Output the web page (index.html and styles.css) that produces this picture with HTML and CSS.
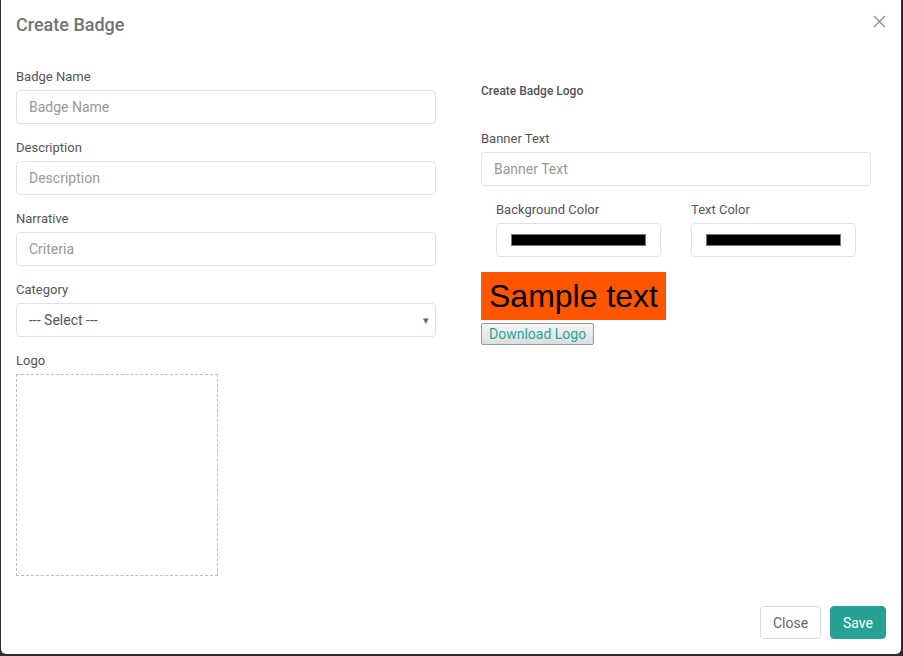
FILE: index.html
```html
<!DOCTYPE html>
<html>
<head>
<meta charset="utf-8">
<link rel="stylesheet" href="styles.css">
</head>
<body>
<div class="modal">
  <div class="modal-header">
    <h4 class="modal-title">Create Badge</h4>
    <button class="close-x" aria-label="Close">
      <svg width="13" height="13" viewBox="0 0 13 13"><path d="M1 1L12 12M12 1L1 12" stroke="#8a8a8a" stroke-width="1.2" fill="none"/></svg>
    </button>
  </div>
  <div class="modal-body">
    <div class="col-left">
      <div class="group">
        <label class="lbl">Badge Name</label>
        <div class="input placeholder">Badge Name</div>
      </div>
      <div class="group">
        <label class="lbl">Description</label>
        <div class="input placeholder">Description</div>
      </div>
      <div class="group">
        <label class="lbl">Narrative</label>
        <div class="input placeholder">Criteria</div>
      </div>
      <div class="group">
        <label class="lbl">Category</label>
        <div class="input select"><span>--- Select ---</span><span class="caret">▾</span></div>
      </div>
      <div class="group">
        <label class="lbl">Logo</label>
        <div class="logo-drop"></div>
      </div>
    </div>
    <div class="col-right">
      <div class="subhead">Create Badge Logo</div>
      <div class="group">
        <label class="lbl">Banner Text</label>
        <div class="input placeholder">Banner Text</div>
      </div>
      <div class="color-row">
        <div class="color-group">
          <label class="lbl">Background Color</label>
          <div class="input color"><div class="swatch"></div></div>
        </div>
        <div class="color-group">
          <label class="lbl">Text Color</label>
          <div class="input color"><div class="swatch"></div></div>
        </div>
      </div>
      <div class="sample">Sample text</div>
      <div><button class="dl-btn">Download Logo</button></div>
    </div>
  </div>
  <div class="modal-footer">
    <button class="btn btn-close">Close</button>
    <button class="btn btn-save">Save</button>
  </div>
</div>
</body>
</html>
```
FILE: styles.css
```css
html, body {
  margin: 0;
  padding: 0;
}
body {
  background: #2e2e2e;
  width: 903px;
  height: 656px;
  overflow: hidden;
  font-family: Roboto, "Liberation Sans", sans-serif;
}
.modal {
  margin-left: 1px;
  width: 900px;
  height: 654px;
  background: #fff;
  border-radius: 0 0 5px 5px;
  display: flex;
  flex-direction: column;
  box-sizing: border-box;
}
.modal-header {
  display: flex;
  justify-content: space-between;
  align-items: flex-start;
  padding: 11px 15px 0 15px;
  height: 56px;
  box-sizing: border-box;
}
.modal-title {
  margin: 0;
  font-size: 18px;
  font-weight: 500;
  line-height: 27px;
  color: #737373;
}
.close-x {
  border: 0;
  background: none;
  padding: 0;
  margin: 4px 0 0 0;
  width: 13px;
  height: 13px;
  display: block;
}
.close-x svg { display: block; }
.modal-body {
  display: grid;
  grid-template-columns: 420px 390px;
  column-gap: 45px;
  padding: 11px 15px 0 15px;
}
.group {
  display: flex;
  flex-direction: column;
  margin-bottom: 14px;
}
.lbl {
  font-size: 13px;
  line-height: 19px;
  color: #555;
  margin-bottom: 4px;
}
.input {
  height: 34px;
  box-sizing: border-box;
  border: 1px solid #e2e2e2;
  border-radius: 4px;
  padding: 0 12px;
  display: flex;
  align-items: center;
  font-size: 14px;
  color: #555;
}
.placeholder { color: #999; }
.select {
  justify-content: space-between;
  padding-right: 6px;
}
.caret {
  font-size: 11px;
  color: #666;
}
.logo-drop {
  width: 202px;
  height: 202px;
  box-sizing: border-box;
  border: 1px dashed #bdbdbd;
}
.subhead {
  font-size: 12px;
  font-weight: 500;
  line-height: 16px;
  color: #555;
  margin: 16px 0 30px 0;
}
.color-row {
  display: flex;
  gap: 30px;
  padding-left: 15px;
}
.color-row .color-group {
  display: flex;
  flex-direction: column;
  width: 165px;
}
.color {
  padding: 0 14px;
}
.swatch {
  width: 100%;
  height: 12px;
  box-sizing: border-box;
  background: #000;
  border: 1px solid #777;
}
.sample {
  margin-top: 15px;
  background: #ff5500;
  color: #000;
  font-family: "Liberation Sans", Arial, sans-serif;
  font-size: 32px;
  line-height: 48px;
  height: 48px;
  padding: 0 8px;
  box-sizing: border-box;
}
.col-right {
  display: flex;
  flex-direction: column;
  align-items: stretch;
}
.col-right .sample { align-self: flex-start; }
.dl-btn {
  margin-top: 3px;
  height: 22px;
  font-family: Roboto, "Liberation Sans", sans-serif;
  font-size: 14px;
  color: #26a69a;
  background: linear-gradient(#f6f6f6, #dddddd);
  border: 1px solid #999;
  border-radius: 2px;
  padding: 0 7px;
  line-height: 18px;
}
.modal-footer {
  margin-top: auto;
  display: flex;
  justify-content: flex-end;
  gap: 9px;
  padding: 0 15px 15px 0;
}
.btn {
  height: 33px;
  box-sizing: border-box;
  border-radius: 4px;
  font-family: Roboto, "Liberation Sans", sans-serif;
  font-size: 14px;
  padding: 0 12px;
}
.btn-close {
  width: 61px;
  background: #fff;
  color: #666;
  border: 1px solid #d9d9d9;
}
.btn-save {
  width: 56px;
  background: #26a193;
  color: #fff;
  border: 1px solid #26a193;
}
```
